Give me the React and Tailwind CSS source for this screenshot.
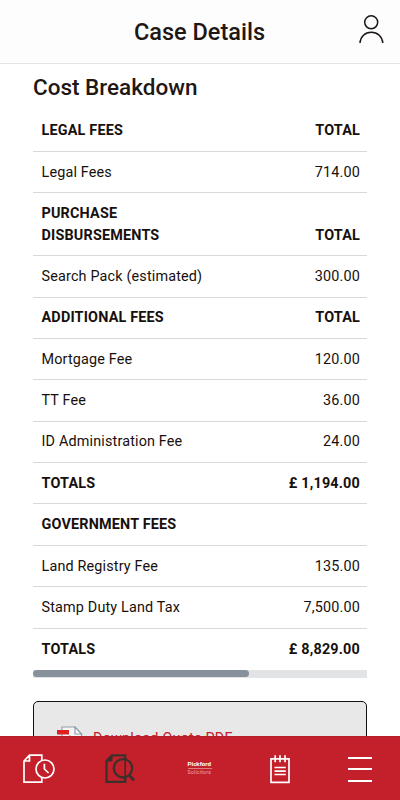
const rows = [
  { label: 'LEGAL FEES', value: 'TOTAL', bold: true },
  { label: 'Legal Fees', value: '714.00' },
  { label: 'PURCHASE DISBURSEMENTS', value: 'TOTAL', bold: true, tall: true },
  { label: 'Search Pack (estimated)', value: '300.00' },
  { label: 'ADDITIONAL FEES', value: 'TOTAL', bold: true },
  { label: 'Mortgage Fee', value: '120.00' },
  { label: 'TT Fee', value: '36.00' },
  { label: 'ID Administration Fee', value: '24.00' },
  { label: 'TOTALS', value: '£ 1,194.00', bold: true },
  { label: 'GOVERNMENT FEES', value: '', bold: true },
  { label: 'Land Registry Fee', value: '135.00' },
  { label: 'Stamp Duty Land Tax', value: '7,500.00' },
  { label: 'TOTALS', value: '£ 8,829.00', bold: true, last: true },
];

function Row({ label, value, bold, tall, last }) {
  return (
    <div
      className={`flex items-end justify-between pr-[7px] pb-[9.2px] pl-[8.5px] text-[14.4px] leading-[21.4px] text-[#17100d] ${
        tall ? 'h-[62.7px]' : 'h-[41.38px]'
      } ${bold ? 'font-bold tracking-[0.18px]' : 'tracking-[0.16px]'} ${last ? '' : 'border-b border-[#d9d9d9]'}`}
    >
      <span className={tall ? 'w-[140px]' : 'whitespace-nowrap'}>{label}</span>
      <span className="whitespace-nowrap">{value}</span>
    </div>
  );
}

function UserIcon() {
  return (
    <svg className="h-[30px] w-[26px]" viewBox="0 0 26 30" fill="none" stroke="#1b1614" strokeWidth="1.5">
      <circle cx="13.2" cy="8.3" r="6.5" />
      <path d="M2 29C2.4 22.6 7 18.3 13.3 18.3S24.3 22.6 24.8 29" />
    </svg>
  );
}

function HistoryIcon() {
  return (
    <svg className="h-[30px] w-[32px]" viewBox="0 0 32 30" fill="none" stroke="#fff" strokeWidth="1.7">
      <path d="M18.8 6V1.2H6.5L1 7V28.2H18.8V24M1 7H6.5V1.2" />
      <circle cx="22" cy="15" r="9" />
      <path d="M21.4 9.7V15L25.6 19" />
    </svg>
  );
}

function SearchCaseIcon() {
  return (
    <svg className="h-[30px] w-[30px]" viewBox="0 0 30 30" fill="none" stroke="#3b302c" strokeWidth="2.3">
      <path d="M20.2 5V1.3H7L1.5 7V27.8H20.2V24" />
      <path d="M1.5 7L7 1.3V7Z" fill="#3b302c" strokeWidth="1" />
      <path d="M20.2 5V24" strokeWidth="1.6" />
      <circle cx="18" cy="14.3" r="9.2" />
      <path d="M24.2 21.3L28.9 26.3" strokeWidth="2.9" />
    </svg>
  );
}

function NotesIcon() {
  return (
    <svg className="h-[29px] w-[20px]" viewBox="0 0 20 29" fill="none" stroke="#fff">
      <path d="M1 3.8H19V27.4H1Z" strokeWidth="1.7" />
      <path d="M5.2 .2V7.3M10 .2V7.3M15 .2V7.3" strokeWidth="1.7" />
      <path d="M4.5 12.5H15.8M4.5 16.1H15.8M4.5 19.5H15.8" strokeWidth="1.7" />
    </svg>
  );
}

function PdfIcon() {
  return (
    <svg className="h-[32px] w-[26px]" viewBox="0 0 26 32">
      <path d="M5 1H18L24.5 8V31H5Z" fill="#f5f5f5" stroke="#929dac" strokeWidth="1.2" />
      <path d="M18 1V8H24.5Z" fill="#fff" stroke="#929dac" strokeWidth="1.2" />
      <path d="M0 4H12V8.5H0Z" fill="#df2020" />
      <path d="M12 9.5L16 10.5V12H12Z" fill="#df2020" />
    </svg>
  );
}

export default function App() {
  return (
    <div className="flex h-[800px] w-[400px] flex-col overflow-hidden bg-white font-['Roboto',sans-serif]">
      <header className="grid h-16 shrink-0 grid-cols-[60px_1fr_60px] items-center border-b border-[#e4e4e4] bg-[#fdfdfd]">
        <span />
        <h1 className="whitespace-nowrap pt-[2px] pr-px text-center text-[23.5px] font-medium text-[#1f1714]">Case Details</h1>
        <button className="flex justify-end pb-[5px] pr-[16px]" aria-label="Profile">
          <UserIcon />
        </button>
      </header>
      <main className="min-h-0 flex-1 overflow-hidden px-[33px]">
        <h2 className="h-[46.7px] whitespace-nowrap pt-[7px] text-[22.5px] leading-[32px] font-medium text-[#1f1714]">
          Cost Breakdown
        </h2>
        <section>
          {rows.map((row, i) => (
            <Row key={i} {...row} />
          ))}
        </section>
        <div className="h-[8px] bg-[#e1e3e4] py-[0.5px]">
          <div className="h-[7px] w-[215.5px] rounded-full bg-[#87919c]" />
        </div>
        <button className="mt-[23.3px] flex h-[80px] w-full items-start rounded-[5px] border border-[#16100e] bg-[#e8e8e8] pl-[23px] pt-[24px] text-[#c2202b]">
          <PdfIcon />
          <span className="ml-[10px] whitespace-nowrap pt-[3px] text-[14.4px] leading-[20px] tracking-[0.2px]">Download Quote PDF</span>
        </button>
      </main>
      <nav className="grid h-16 shrink-0 grid-cols-5 items-center border-t border-[#b51f2a] bg-[#c4202b]">
        <a className="flex justify-center pr-[2px]"><HistoryIcon /></a>
        <a className="flex justify-center"><SearchCaseIcon /></a>
        <a className="flex justify-center pr-px">
          <div className="w-[24px] text-white">
            <div className="whitespace-nowrap border-b border-[#df7d83] text-[6.2px] leading-[7px] font-bold">Pickford</div>
            <div className="whitespace-nowrap text-[5.2px] leading-[7px] tracking-[0.2px] text-[#eba9ad]">Solicitors</div>
          </div>
        </a>
        <a className="flex justify-center pt-px"><NotesIcon /></a>
        <a className="flex flex-col items-center gap-[9.5px] pt-px">
          <span className="h-[2px] w-[24px] bg-white" />
          <span className="h-[2px] w-[24px] bg-white" />
          <span className="h-[2px] w-[24px] bg-white" />
        </a>
      </nav>
    </div>
  );
}
